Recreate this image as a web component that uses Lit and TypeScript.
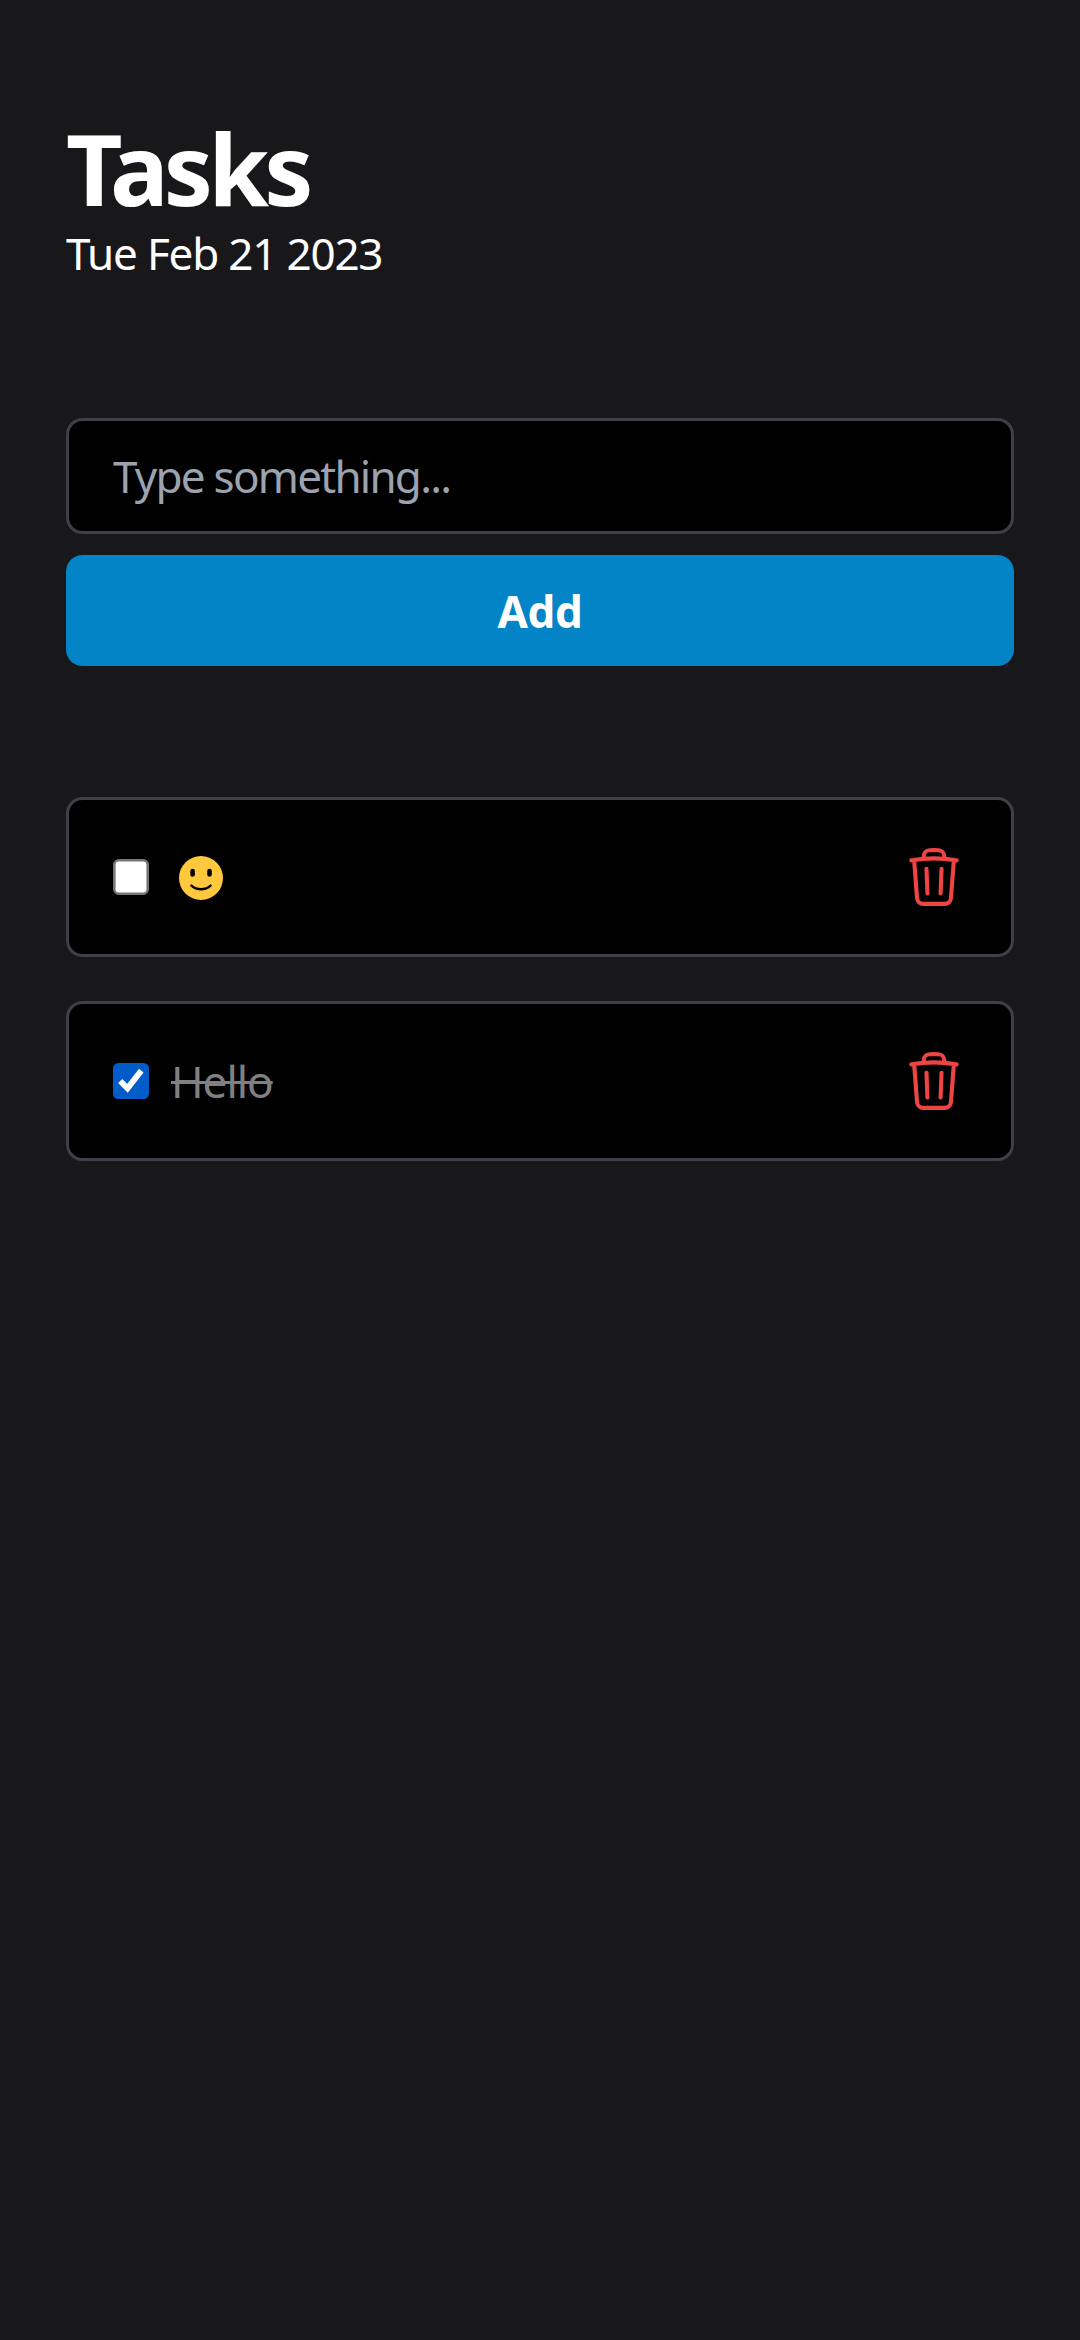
import { LitElement, html, css, svg } from "lit";
import { customElement, property, state } from "lit/decorators.js";
import { classMap } from "lit/directives/class-map.js";

interface Task {
  id: number;
  text: string;
  smile?: boolean;
  done: boolean;
}

const smile = html`<svg class="smile" viewBox="0 0 44 44" role="img" aria-label="slightly smiling face">
  ${svg`<circle cx="22" cy="22" r="22" fill="#ffc83d" />
  <rect x="11.3" y="12.8" width="4.6" height="8" rx="2.3" fill="#000" />
  <rect x="28.2" y="12.8" width="4.6" height="8" rx="2.3" fill="#000" />
  <path d="M12.4 29.6c5.400 4.800 13.800 4.800 19.200 0" fill="none" stroke="#000" stroke-width="2.400" stroke-linecap="round" />`}
</svg>`;

@customElement("task-row")
export class TaskRow extends LitElement {
  @property({ attribute: false }) task!: Task;

  static styles = css`
    :host {
      display: flex;
      box-sizing: border-box;
      align-items: center;
      height: 160px;
      padding: 0 44px;
      border: 3px solid #3f3f46;
      border-radius: 16.5px;
      background: #000;
    }
    .box {
      display: block;
      flex: none;
      width: 36px;
      height: 36px;
    }
    .label {
      display: flex;
      align-items: center;
      flex: 1;
      margin-left: 22px;
      color: #fff;
      line-height: 66px;
    }
    .done .text {
      color: #808080;
      text-decoration: line-through;
      text-decoration-thickness: 3px;
    }
    .text {
      letter-spacing: -1px;
    }
    .smile {
      width: 44px;
      height: 44px;
      margin-left: 8px;
      margin-top: 2px;
    }
    .remove {
      display: block;
      padding: 0;
      border: 0;
      background: none;
      color: #ef4444;
    }
    .trash {
      display: block;
      width: 66px;
      height: 66px;
    }
  `;

  private emit(name: string) {
    this.dispatchEvent(new CustomEvent(name, { detail: this.task.id }));
  }

  render() {
    const { done, text, smile: face } = this.task;
    return html`
      <svg class="box" viewBox="0 0 36 36" role="checkbox" aria-checked=${done} @click=${() => this.emit("toggle")}>
        ${done
          ? svg`<rect width="36" height="36" rx="5.500" fill="#005cc8" />
              <path d="M7.200 18L14.500 25.400L28.300 7.600" fill="none" stroke="#fff" stroke-width="5.800" />`
          : svg`<rect x="1.300" y="1.300" width="33.400" height="33.400" rx="4.500" fill="#fff" stroke="#767676" stroke-width="2.600" />`}
      </svg>
      <div class=${classMap({ label: true, done })}>
        ${face ? smile : html`<span class="text">${text}</span>`}
      </div>
      <button class="remove" aria-label="Delete" @click=${() => this.emit("remove")}>
        <svg class="trash" viewBox="0 0 24 24" fill="none" stroke="currentColor" stroke-width="1.5" stroke-linecap="round" stroke-linejoin="round">
          <path d="M14.74 9l-.346 9m-4.788 0L9.26 9m9.968-3.21c.342.052.682.107 1.022.166m-1.022-.165L18.16 19.673a2.25 2.25 0 01-2.244 2.077H8.084a2.25 2.25 0 01-2.244-2.077L4.772 5.79m14.456 0a48.108 48.108 0 00-3.478-.397m-12 .562c.34-.059.68-.114 1.022-.165m0 0a48.11 48.11 0 013.478-.397m7.5 0v-.916c0-1.18-.91-2.164-2.09-2.201a51.964 51.964 0 00-3.32 0c-1.18.037-2.09 1.022-2.09 2.201v.916m7.5 0a48.667 48.667 0 00-7.5 0" />
        </svg>
      </button>
    `;
  }
}

@customElement("app-root")
export class AppRoot extends LitElement {
  @state() private tasks: Task[] = [
    { id: 1, text: "", smile: true, done: false },
    { id: 2, text: "Hello", done: true },
  ];

  static styles = css`
    :host {
      display: block;
      box-sizing: border-box;
      min-height: 2340px;
      padding: 113px 66px;
      background: #18181b;
      color: #fff;
      font-family: "Noto Sans", "Liberation Sans", sans-serif;
      font-size: 44px;
      line-height: 66px;
    }
    .title {
      margin: 0;
      font-size: 98px;
      font-weight: 700;
      line-height: 110px;
      letter-spacing: -4.8px;
    }
    .date {
      margin: -3px 0 0;
      letter-spacing: -1.2px;
    }
    .form {
      display: flex;
      flex-direction: column;
      gap: 21px;
      margin-top: 132px;
    }
    .field {
      box-sizing: border-box;
      width: 100%;
      height: 116px;
      padding: 0 44px;
      border: 3px solid #3f3f46;
      border-radius: 16.5px;
      background: #000;
      color: #fff;
      font: inherit;
      letter-spacing: -1.75px;
      outline: none;
    }
    .field::placeholder {
      color: #9ca3af;
      opacity: 1;
    }
    .add {
      height: 111px;
      padding: 0;
      border: 0;
      border-radius: 16.5px;
      background: #0284c7;
      color: #fff;
      font: inherit;
      font-weight: 700;
      letter-spacing: -0.4px;
    }
    .list {
      display: flex;
      flex-direction: column;
      gap: 44px;
      margin-top: 131px;
    }
  `;

  private add() {
    const field = this.renderRoot.querySelector<HTMLInputElement>(".field")!;
    const text = field.value.trim();
    if (!text) return;
    this.tasks = [...this.tasks, { id: Date.now(), text, done: false }];
    field.value = "";
  }

  render() {
    return html`
      <header>
        <h1 class="title">Tasks</h1>
        <p class="date">Tue Feb 21 2023</p>
      </header>
      <div class="form">
        <input class="field" type="text" placeholder="Type something..." />
        <button class="add" @click=${this.add}>Add</button>
      </div>
      <main class="list">
        ${this.tasks.map(
          (task) => html`<task-row
            .task=${task}
            @toggle=${() => (this.tasks = this.tasks.map((t) => (t.id === task.id ? { ...t, done: !t.done } : t)))}
            @remove=${() => (this.tasks = this.tasks.filter((t) => t.id !== task.id))}
          ></task-row>`
        )}
      </main>
    `;
  }
}
